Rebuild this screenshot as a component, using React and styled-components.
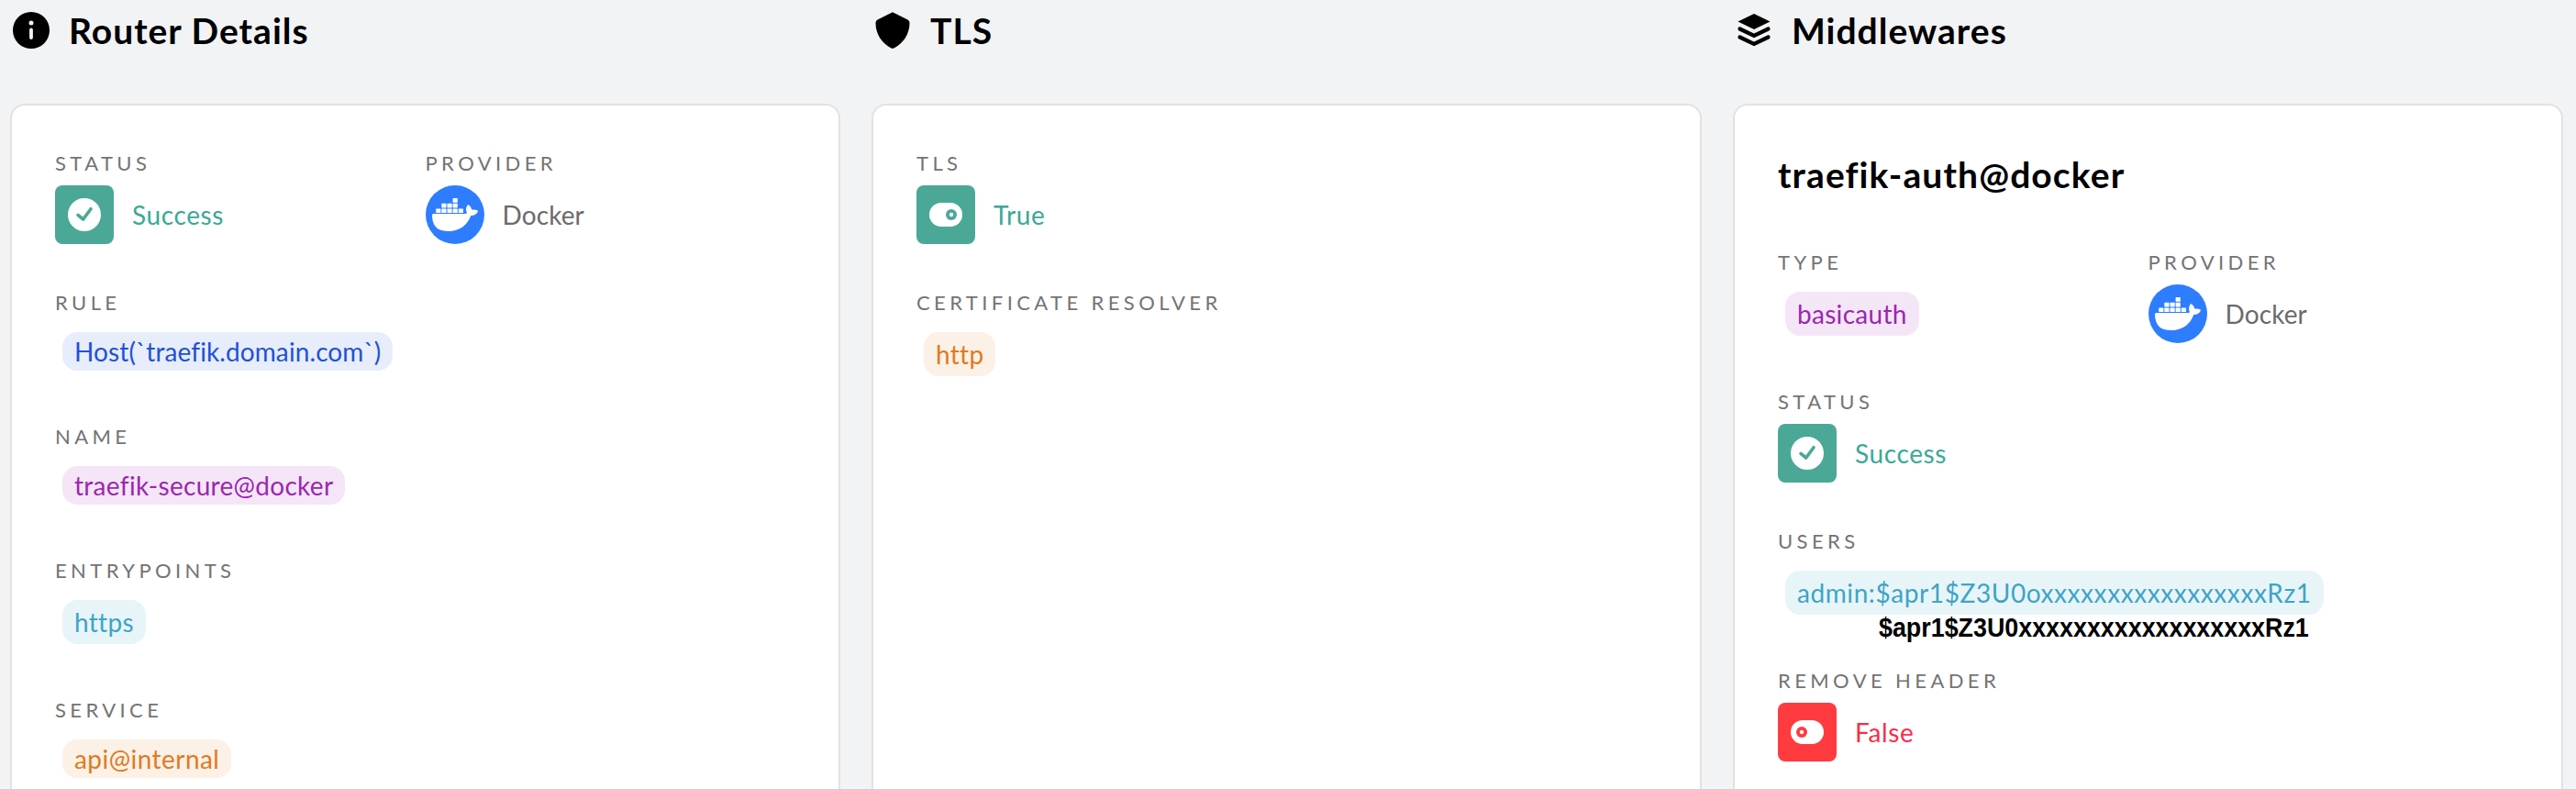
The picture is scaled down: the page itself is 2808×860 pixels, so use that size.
import React from "react";
import styled, { createGlobalStyle } from "styled-components";
import { SiDocker } from "react-icons/si";

const GlobalStyle = createGlobalStyle`
  html, body {
    margin: 0;
    padding: 0;
    background: #f2f3f5;
  }
  body {
    font-family: Lato, "Noto Sans", sans-serif;
  }
`;

const Page = styled.div`
  display: grid;
  grid-template-columns: repeat(3, 1fr);
  column-gap: 34px;
  height: 860px;
  padding: 0 14px 0 11px;
  box-sizing: border-box;
  overflow: hidden;
`;

const Section = styled.section`
  display: flex;
  flex-direction: column;
  min-width: 0;
`;

const SectionHeader = styled.div`
  display: flex;
  align-items: center;
  gap: 21px;
  height: 40px;
  padding: 13px 0 60px 3px;
`;

const HeaderIcon = styled.svg`
  width: 40px;
  height: 40px;
  flex: none;
  fill: #000;
`;

const SectionTitle = styled.h2`
  margin: 0;
  font-size: 39px;
  line-height: 40px;
  font-weight: 700;
  letter-spacing: 1px;
  color: #000;
`;

const Card = styled.div`
  box-sizing: border-box;
  height: 800px;
  padding: 51px 47px;
  background: #fff;
  border: 2px solid #e2e2e2;
  border-radius: 16px;
`;

const CardTitle = styled.h3`
  margin: 0 0 60px;
  font-size: 39px;
  line-height: 48px;
  font-weight: 700;
  letter-spacing: 1.1px;
  color: #000;
`;

const Row = styled.div`
  display: flex;
`;

const Field = styled.div`
  width: ${(p) => (p.$half ? "404px" : "auto")};
  margin-bottom: 52px;
  position: relative;
`;

const Label = styled.div`
  height: 24px;
  margin-bottom: 12px;
  font-size: 22px;
  line-height: 24px;
  letter-spacing: 4.4px;
  color: #737373;
  text-transform: uppercase;
`;

const Status = styled.div`
  display: flex;
  align-items: center;
  gap: 20px;
  height: 64px;
  font-size: 28px;
  letter-spacing: ${(p) => p.$track || "0.6px"};
  color: ${(p) => p.$color};
`;

const Avatar = styled.div`
  display: flex;
  align-items: center;
  justify-content: center;
  width: 64px;
  height: 64px;
  flex: none;
  background: ${(p) => p.$color};
  border-radius: ${(p) => (p.$round ? "50%" : "8px")};
`;

const Chip = styled.div`
  display: inline-flex;
  align-items: center;
  height: ${(p) => (p.$tall ? "48px" : "42px")};
  margin: 8px;
  padding: 0 13px;
  border-radius: 16px;
  font-size: 28px;
  letter-spacing: ${(p) => p.$track || "0.3px"};
  color: ${(p) => p.$color};
  background: ${(p) => p.$bg};
`;

// this line is squeezed in the screenshot, it sits right under the users chip
const PastedHash = styled.div`
  position: absolute;
  left: 110px;
  top: 90px;
  font-family: "Liberation Sans", Arial, sans-serif;
  font-size: 30px;
  line-height: 32px;
  font-weight: 700;
  color: #000;
  white-space: nowrap;
  transform: scaleX(0.895);
  transform-origin: left center;
`;

const GREEN = "#4ca896";
const GREEN_TEXT = "#3aa997";
const RED = "#ff3b3f";
const RED_TEXT = "#fb2c4a";

const chipColors = {
  blue: { $color: "#1f51d8", $bg: "#e7edfb" },
  purple: { $color: "#9c27b0", $bg: "#f4e6f7" },
  teal: { $color: "#3ea4c5", $bg: "#e7f5f9" },
  orange: { $color: "#e07a21", $bg: "#fcf1e6" },
};

const CheckIcon = () => (
  <svg width="38" height="38" viewBox="0 0 38 38">
    <circle cx="19" cy="19" r="18" fill="#fff" />
    <path d="M12 19.300l5.700 4.700L26 12.700" fill="none" stroke={GREEN} strokeWidth="3.600" strokeLinecap="round" strokeLinejoin="round" />
  </svg>
);

const ToggleIcon = ({ color, off }) => (
  <svg width="36" height="26" viewBox="0 0 36 26">
    <rect width="36" height="26" rx="13" fill="#fff" />
    <circle cx={off ? 12 : 24} cy="13" r="6" fill={color} />
    <circle cx={off ? 12 : 24} cy="13" r="2.200" fill="#fff" />
  </svg>
);

const Provider = () => (
  <Field $half>
    <Label>Provider</Label>
    <Status $color="#6b6b6b" $track="0.1px">
      <Avatar $round $color="#2f7dff">
        <SiDocker size={50} color="#fff" />
      </Avatar>
      Docker
    </Status>
  </Field>
);

const SuccessStatus = ({ half }) => (
  <Field $half={half}>
    <Label>Status</Label>
    <Status $color={GREEN_TEXT}>
      <Avatar $color={GREEN}><CheckIcon /></Avatar>
      Success
    </Status>
  </Field>
);

const App = () => {
  return (
    <>
      <GlobalStyle />
      <Page>
        <Section>
          <SectionHeader>
            <HeaderIcon viewBox="0 0 40 40">
              <path fillRule="evenodd" d="M20 0a20 20 0 1 1 0 40a20 20 0 0 1 0-40zM20 9.500a2.500 2.500 0 1 0 0 5a2.500 2.500 0 0 0 0-5zM20 17.500a1.900 1.900 0 0 0-1.900 1.900v8.600a1.900 1.900 0 0 0 3.800 0v-8.600a1.900 1.900 0 0 0-1.900-1.900z" />
            </HeaderIcon>
            <SectionTitle>Router Details</SectionTitle>
          </SectionHeader>
          <Card>
            <Row>
              <SuccessStatus half />
              <Provider />
            </Row>
            <Field>
              <Label>Rule</Label>
              <Chip {...chipColors.blue} $track="0.1px">Host(`traefik.domain.com`)</Chip>
            </Field>
            <Field>
              <Label>Name</Label>
              <Chip {...chipColors.purple}>traefik-secure@docker</Chip>
            </Field>
            <Field>
              <Label>Entrypoints</Label>
              <Chip $tall {...chipColors.teal}>https</Chip>
            </Field>
            <Field>
              <Label>Service</Label>
              <Chip {...chipColors.orange} $track="0.45px">api@internal</Chip>
            </Field>
          </Card>
        </Section>

        <Section>
          <SectionHeader>
            <HeaderIcon viewBox="0 0 40 40">
              <path d="M20 0.200L36.500 8.500Q38.500 9.500 38.500 12C38.500 24 32 34 21.500 39.500Q20 40.200 18.500 39.500C8 34 1.500 24 1.500 12Q1.500 9.500 3.500 8.500Z" />
            </HeaderIcon>
            <SectionTitle>TLS</SectionTitle>
          </SectionHeader>
          <Card>
            <Field>
              <Label>TLS</Label>
              <Status $color={GREEN_TEXT}>
                <Avatar $color={GREEN}><ToggleIcon color={GREEN} /></Avatar>
                True
              </Status>
            </Field>
            <Field>
              <Label>Certificate Resolver</Label>
              <Chip $tall {...chipColors.orange}>http</Chip>
            </Field>
          </Card>
        </Section>

        <Section>
          <SectionHeader>
            <HeaderIcon viewBox="0 0 40 40">
              <path d="M20 2L37.500 10.500L20 19L2.500 10.500z" />
              <path d="M4.500 18.500L20 26L35.500 18.500" fill="none" stroke="#000" strokeWidth="4.200" strokeLinecap="round" />
              <path d="M4.500 27.500L20 35L35.500 27.500" fill="none" stroke="#000" strokeWidth="4.200" strokeLinecap="round" />
            </HeaderIcon>
            <SectionTitle>Middlewares</SectionTitle>
          </SectionHeader>
          <Card>
            <CardTitle>traefik-auth@docker</CardTitle>
            <Row>
              <Field $half>
                <Label>Type</Label>
                <Chip $tall {...chipColors.purple}>basicauth</Chip>
              </Field>
              <Provider />
            </Row>
            <SuccessStatus />
            <Field>
              <Label>Users</Label>
              <Chip $tall {...chipColors.teal} $track="0.58px">admin:$apr1$Z3U0oxxxxxxxxxxxxxxxxxRz1</Chip>
              <PastedHash>$apr1$Z3U0xxxxxxxxxxxxxxxxxxRz1</PastedHash>
            </Field>
            <Field>
              <Label>Remove Header</Label>
              <Status $color={RED_TEXT}>
                <Avatar $color={RED}><ToggleIcon color={RED} off /></Avatar>
                False
              </Status>
            </Field>
          </Card>
        </Section>
      </Page>
    </>
  );
};

export default App;
